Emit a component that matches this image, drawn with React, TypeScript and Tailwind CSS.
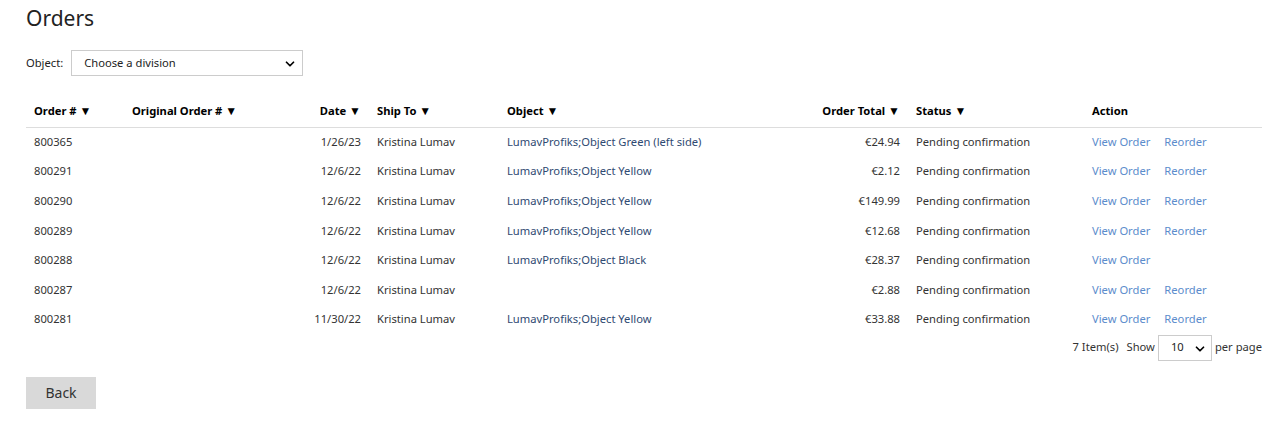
import { ChevronDown } from "lucide-react";

type Order = {
  id: string;
  date: string;
  object: string;
  total: string;
  reorder: boolean;
};

const orders: Order[] = [
  { id: "800365", date: "1/26/23", object: "LumavProfiks;Object Green (left side)", total: "€24.94", reorder: true },
  { id: "800291", date: "12/6/22", object: "LumavProfiks;Object Yellow", total: "€2.12", reorder: true },
  { id: "800290", date: "12/6/22", object: "LumavProfiks;Object Yellow", total: "€149.99", reorder: true },
  { id: "800289", date: "12/6/22", object: "LumavProfiks;Object Yellow", total: "€12.68", reorder: true },
  { id: "800288", date: "12/6/22", object: "LumavProfiks;Object Black", total: "€28.37", reorder: false },
  { id: "800287", date: "12/6/22", object: "", total: "€2.88", reorder: true },
  { id: "800281", date: "11/30/22", object: "LumavProfiks;Object Yellow", total: "€33.88", reorder: true },
];

function SortHead({ label, right = false }: { label: string; right?: boolean }) {
  return (
    <th className={`px-2 pb-[7px] pt-0 font-bold text-black ${right ? "text-right" : "text-left"}`}>
      {label} <span className="text-[12px]">▼</span>
    </th>
  );
}

export default function App() {
  return (
    <div className="min-h-[442px] bg-white px-[26px] pt-[4px] text-[11.2px] text-[#333] [font-family:'Noto_Sans','Open_Sans',sans-serif]">
      <h1 className="text-[21px] leading-[28px] font-normal text-[#222]">Orders</h1>

      {/* division filter */}
      <div className="mt-[18px] flex items-center gap-2">
        <label className="text-[#222]">Object:</label>
        <div className="relative flex h-[26px] w-[232px] items-center border border-[#ccc] bg-white pl-3">
          <span className="text-[#222]">Choose a division</span>
          <ChevronDown className="absolute right-[5px] top-[6px] h-3.5 w-3.5 text-black" strokeWidth={3} />
        </div>
      </div>

      <table className="mt-[26px] w-[1236px] table-fixed border-collapse">
        <colgroup>
          <col className="w-[98px]" />
          <col className="w-[170px]" />
          <col className="w-[75px]" />
          <col className="w-[130px]" />
          <col className="w-[230px]" />
          <col className="w-[179px]" />
          <col className="w-[176px]" />
          <col className="w-[178px]" />
        </colgroup>
        <thead>
          <tr className="border-b border-[#ddd]">
            <SortHead label="Order #" />
            <SortHead label="Original Order #" />
            <SortHead label="Date" right />
            <SortHead label="Ship To" />
            <SortHead label="Object" />
            <SortHead label="Order Total" right />
            <SortHead label="Status" />
            <th className="px-2 pb-[7px] text-left font-bold text-black">Action</th>
          </tr>
        </thead>
        <tbody>
          {orders.map((o) => (
            <tr key={o.id} className="h-[29.6px]">
              <td className="px-2">{o.id}</td>
              <td className="px-2"></td>
              <td className="px-2 text-right">{o.date}</td>
              <td className="px-2">Kristina Lumav</td>
              <td className="px-2 text-[#2f4a72]">{o.object}</td>
              <td className="px-2 text-right">{o.total}</td>
              <td className="px-2">Pending confirmation</td>
              <td className="px-2">
                <div className="flex gap-[14px] text-[#5b8ccc]">
                  <a href="#">View Order</a>
                  {o.reorder && <a href="#">Reorder</a>}
                </div>
              </td>
            </tr>
          ))}
        </tbody>
      </table>

      {/* pager */}
      <div className="flex w-[1236px] items-center justify-end gap-[8px]">
        <span>7 Item(s)</span>
        <span>Show</span>
        <div className="relative -ml-[5px] flex h-[26px] w-[54px] items-center border border-[#ccc] pl-[12px] text-[#222]">
          10
          <ChevronDown className="absolute right-[4px] top-[6px] h-3.5 w-3.5 text-black" strokeWidth={3} />
        </div>
        <span className="-ml-[5px]">per page</span>
      </div>

      <button className="mt-[16px] h-[32px] w-[70px] bg-[#d9d9d9] text-[14px] text-[#333]">Back</button>
    </div>
  );
}
